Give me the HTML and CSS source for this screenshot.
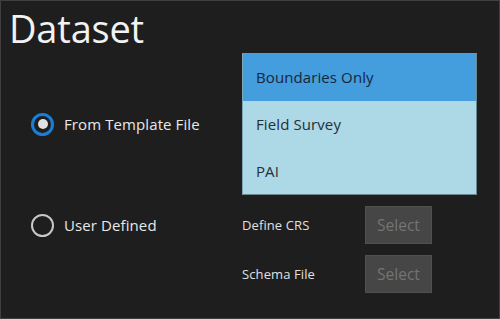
FILE: index.html
```html
<!DOCTYPE html>
<html>
<head>
<meta charset="utf-8">
<link rel="stylesheet" href="styles.css">
</head>
<body>
<div class="page">
  <h1 class="title">Dataset</h1>
  <div class="content">
    <label class="radio radio-one">
      <span class="ring checked"><span class="dot"></span></span>
      <span class="radio-label">From Template File</span>
    </label>
    <ul class="list">
      <li class="item selected">Boundaries Only</li>
      <li class="item">Field Survey</li>
      <li class="item">PAI</li>
    </ul>
    <label class="radio radio-two">
      <span class="ring"></span>
      <span class="radio-label">User Defined</span>
    </label>
    <div class="field">
      <span class="field-label">Define CRS</span>
      <button class="btn">Select</button>
    </div>
    <div class="field field-last">
      <span class="field-label">Schema File</span>
      <button class="btn">Select</button>
    </div>
  </div>
</div>
</body>
</html>
```

FILE: styles.css
```css
html, body {
  margin: 0;
  padding: 0;
  background: #1e1e1e;
}
.page {
  width: 500px;
  height: 319px;
  box-sizing: border-box;
  border: 1px solid #404040;
  background: #1e1e1e;
  font-family: "Open Sans", "Noto Sans", sans-serif;
  color: #e6e6e6;
  overflow: hidden;
}
.title {
  margin: 0;
  padding: 0 0 0 8px;
  height: 52px;
  font-size: 38px;
  font-weight: 400;
  line-height: 54px;
  color: #f2f2f2;
  letter-spacing: -0.2px;
}
.content {
  display: grid;
  grid-template-columns: 211px 235px;
  grid-template-rows: 142px 38px 38px;
  row-gap: 11px;
  padding-left: 30px;
}
.radio {
  display: flex;
  align-items: center;
  gap: 10px;
  align-self: center;
}
.radio-one { grid-column: 1; grid-row: 1; }
.radio-two { grid-column: 1; grid-row: 2; }
.ring {
  width: 23px;
  height: 23px;
  box-sizing: border-box;
  border: 2px solid #c8c8c8;
  border-radius: 50%;
  display: flex;
  align-items: center;
  justify-content: center;
}
.ring.checked {
  border: 3px solid #1a7fd4;
}
.dot {
  width: 10px;
  height: 10px;
  border-radius: 50%;
  background: #e0e0e0;
}
.radio-label {
  font-size: 15px;
  color: #e8e8e8;
  letter-spacing: 0.1px;
}
.list {
  grid-column: 2;
  grid-row: 1;
  list-style: none;
  margin: 0;
  padding: 0;
  background: #add8e6;
  border: 1px solid #6b8792;
  border-top-color: #4a9ede;
  border-left-color: #7ea8b8;
  display: flex;
  flex-direction: column;
}
.item {
  flex: 1;
  display: flex;
  align-items: center;
  padding-left: 13px;
  font-size: 15px;
  color: #252f36;
  letter-spacing: 0.1px;
}
.selected {
  background: #449ddd;
  color: #18263a;
}
.field {
  display: flex;
  align-items: center;
  grid-column: 2;
}
.field-label {
  width: 123px;
  font-size: 13px;
  color: #e0e0e0;
  letter-spacing: 0.1px;
}
.btn {
  width: 67px;
  height: 38px;
  box-sizing: border-box;
  background: #464646;
  border: 1px solid #505050;
  color: #747474;
  font-family: inherit;
  font-size: 15.5px;
  padding: 0;
}
```
